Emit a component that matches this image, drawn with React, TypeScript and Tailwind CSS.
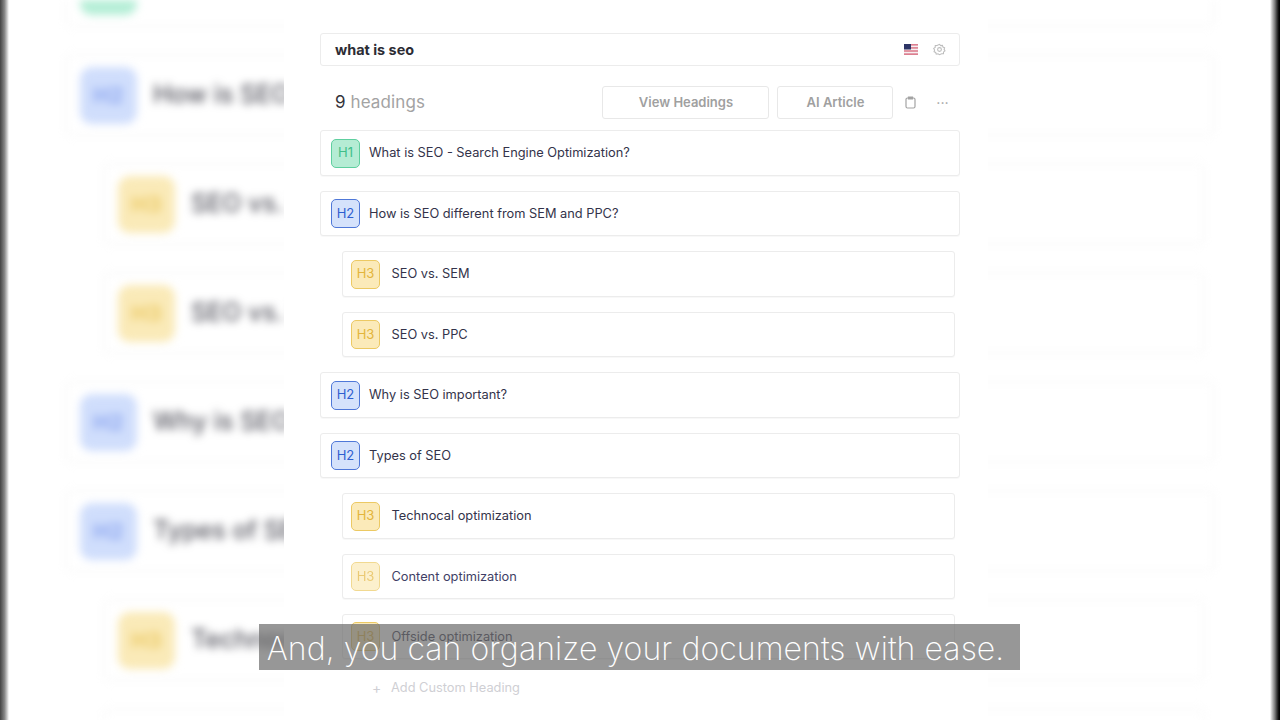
import React from "react";

const tone: Record<string, string> = {
  H1: "bg-[#b5ecd4] border-[#5fcf9f] text-[#3fbf8a]",
  H2: "bg-[#d5e2fb] border-[#4f78d8] text-[#2f5fd0]",
  H3: "bg-[#fbeab9] border-[#ecc963] text-[#e3b53c]",
};

function Row({ level, text, indent, h = "h-[46px]", badge = "", label = "text-[#33334a]" }: { level: string; text: string; indent?: boolean; h?: string; badge?: string; label?: string }) {
  return (
    <div className={`flex shrink-0 items-center rounded-[3px] border border-[#ececec] bg-white shadow-[0_1px_1px_rgba(0,0,0,0.03)] ${h} ${indent ? "ml-[22px] mr-[5px] pl-[8px]" : "pl-[10px]"}`}>
      <span className={`flex h-[29px] w-[29px] shrink-0 items-center justify-center rounded-[5px] border text-[13px] ${tone[level]} ${badge}`}>{level}</span>
      <span className={`text-[12.8px] ${label} ${indent ? "ml-[11.5px]" : "ml-[9px]"}`}>{text}</span>
    </div>
  );
}

function BlurRow({ level, text, indent }: { level: string; text: string; indent?: boolean }) {
  const c = level === "H1" ? "bg-[#b4eed6]" : level === "H2" ? "bg-[#d0defc]" : "bg-[#faeab8]";
  const t = level === "H1" ? "text-[#6fd0a8]" : level === "H2" ? "text-[#8fa8f0]" : "text-[#eccb68]";
  return (
    <div className={`flex h-[82px] shrink-0 items-center rounded-md border-2 border-[#f7f7f7] ${indent ? "ml-[38px] mr-[10px] pl-[13px]" : "pl-[13px]"}`}>
      <span className={`flex h-[57px] w-[57px] shrink-0 items-center justify-center rounded-xl text-[22px] font-bold ${c} ${t}`}>{level}</span>
      <span className="ml-[16px] text-[25px] font-medium text-[#55555f]">{text}</span>
    </div>
  );
}

const Flag = () => (
  <svg width="14" height="11" viewBox="0 0 14 11" aria-hidden="true">
    <rect width="14" height="11" fill="#f7eef0" />
    <rect y="0" width="14" height="1.6" fill="#dc7f90" />
    <rect y="3.1" width="14" height="1.6" fill="#dc7f90" />
    <rect y="6.2" width="14" height="1.6" fill="#dc7f90" />
    <rect y="9.3" width="14" height="1.7" fill="#dc7f90" />
    <rect width="7" height="5.5" fill="#2d3566" />
  </svg>
);

const Gear = () => (
  <svg width="13" height="13" viewBox="0 0 24 24" fill="none" stroke="#bdbdbd" strokeWidth="2" aria-hidden="true">
    <circle cx="12" cy="12" r="3.5" />
    <path d="M12 2.500l2.200 2.400 3.200-.5 1 3.100 3 1.200-.9 3.100 1.600 2.800-2.600 1.900-.2 3.300-3.300.2L12 21.500l-2.800-1.500-3.200.6-1-3.100-3-1.400.9-3.100L1.300 10l2.700-1.900.2-3.300 3.300-.1z" />
  </svg>
);

const Clipboard = () => (
  <svg width="11" height="13" viewBox="0 0 11 13" fill="none" stroke="#a3a3a3" strokeWidth="1.2" aria-hidden="true">
    <rect x="1" y="2" width="9" height="10" rx="1.5" />
    <path d="M3.500 1h4v2h-4z" fill="#a3a3a3" />
  </svg>
);

export default function App() {
  return (
    <div className="relative h-[720px] w-[1280px] overflow-hidden bg-white font-['Inter',sans-serif]">
      {/* blurred page behind */}
      <div className="absolute inset-0 overflow-hidden blur-[4.5px]">
        <div className="mt-[-55px] ml-[65px] flex w-[1150px] flex-col gap-[27px]">
          <BlurRow level="H1" text="What is SEO" />
          <BlurRow level="H2" text="How is SEO different" />
          <BlurRow level="H3" text="SEO vs. SEM" indent />
          <BlurRow level="H3" text="SEO vs. PPC" indent />
          <BlurRow level="H2" text="Why is SEO important" />
          <BlurRow level="H2" text="Types of SEO" />
          <BlurRow level="H3" text="Technocal" indent />
          <BlurRow level="H3" text="Content" indent />
        </div>
      </div>

      {/* video letterbox edges */}
      <div className="absolute inset-y-0 left-0 w-[9px] bg-gradient-to-r from-[#444444] via-[#888888] to-white" />
      <div className="absolute inset-y-0 right-0 w-[10px] bg-gradient-to-l from-[#000000] via-[#777777] to-white" />

      {/* centre panel */}
      <div className="absolute inset-y-0 left-[284px] flex w-[704px] flex-col bg-white pl-[36px] pr-[28px] pt-[33px]">
        <div className="flex h-[33px] shrink-0 items-center rounded-[3px] border border-[#ececec] pl-[14px] pr-[13px]">
          <span className="text-[14.4px] font-bold text-[#2c2c34]">what is seo</span>
          <span className="ml-auto flex items-center gap-[15px]">
            <Flag />
            <Gear />
          </span>
        </div>

        <div className="mt-[20px] flex h-[33px] shrink-0 items-center pl-[15px]">
          <span className="text-[17px] tracking-[0.1px] text-[#a3a3a3]"><span className="text-[#33333a]">9</span> headings</span>
          <button className="ml-auto flex h-[33px] w-[167px] items-center justify-center rounded-[3px] border border-[#e8e8e8] text-[13px] font-semibold text-[#a0a0a0]">View Headings</button>
          <button className="ml-[8px] flex h-[33px] w-[116px] items-center justify-center rounded-[3px] border border-[#e8e8e8] text-[13px] font-semibold text-[#a0a0a0]">AI Article</button>
          <span className="ml-[12px] flex w-[11px] justify-center"><Clipboard /></span>
          <span className="ml-[20px] mr-[11px] mt-[2px] text-[11px] font-bold leading-none tracking-[0.5px] text-[#a3a3a3]">···</span>
        </div>

        <div className="mt-[11px] flex flex-col gap-[15px]">
          <Row level="H1" text="What is SEO - Search Engine Optimization?" />
          <Row level="H2" text="How is SEO different from SEM and PPC?" h="h-[45px]" />
          <Row level="H3" text="SEO vs. SEM" indent />
          <Row level="H3" text="SEO vs. PPC" indent h="h-[45px]" />
          <Row level="H2" text="Why is SEO important?" />
          <Row level="H2" text="Types of SEO" h="h-[45px]" />
          <Row level="H3" text="Technocal optimization" indent />
          <Row level="H3" text="Content optimization" indent h="h-[45px]" badge="opacity-70" label="text-[#3f3f66]" />
          <Row level="H3" text="Offside optimization" indent h="h-[45px]" />
        </div>

        <div className="mt-[18px] flex items-center pl-[52px] text-[12.8px] text-[#cfcfd4]">
          <span className="w-[19px] text-[14px]">+</span>
          <span>Add Custom Heading</span>
        </div>
      </div>

      {/* caption */}
      <div className="absolute left-[259px] top-[624px] flex h-[46px] w-[761px] items-center justify-center bg-[#6b6b6b]/70">
        <span className="mt-[4px] mr-[8px] whitespace-nowrap text-[32px] font-extralight leading-none tracking-[0.08px] text-white">And, you can organize your documents with ease.</span>
      </div>
    </div>
  );
}
